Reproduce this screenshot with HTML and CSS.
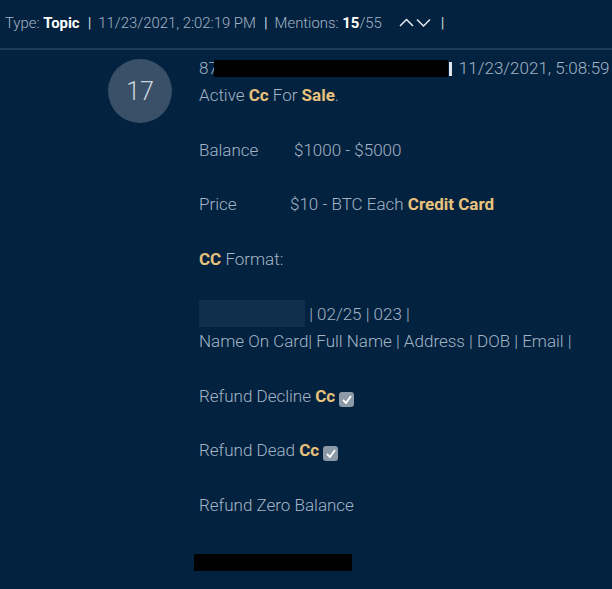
FILE: index.html
```html
<!DOCTYPE html>
<html>
<head>
<meta charset="utf-8">
<link rel="stylesheet" href="styles.css">
</head>
<body>
<div class="page">
  <header class="topbar">
    <span>Type: <b class="w">Topic</b></span>
    <span class="sep">|</span>
    <span>11/23/2021, 2:02:19 PM</span>
    <span class="sep">|</span>
    <span>Mentions: <b class="w">15</b>/55</span>
    <span class="chev">
      <svg width="34" height="12" viewBox="0 0 34 12"><path d="M1 9 L7.5 2.5 L14 9" fill="none" stroke="#e6edf4" stroke-width="1.5"/><path d="M18 2.5 L24.5 9 L31 2.5" fill="none" stroke="#e6edf4" stroke-width="1.5"/></svg>
    </span>
    <span class="sep last">|</span>
  </header>
  <main class="post">
    <div class="avatar">17</div>
    <div class="body">
      <div class="line meta"><span>87</span><span class="redact top"></span><span class="bar"></span><span>11/23/2021, 5:08:59</span></div>
      <div class="line">Active <b class="g">Cc</b> For <b class="g">Sale</b>.</div>
      <div class="line"></div>
      <div class="line"><span class="lbl lb1">Balance</span>$1000 - $5000</div>
      <div class="line"></div>
      <div class="line"><span class="lbl lb2">Price</span>$10 - BTC Each <b class="g">Credit Card</b></div>
      <div class="line"></div>
      <div class="line"><b class="g">CC</b> Format:</div>
      <div class="line"></div>
      <div class="line"><span class="blur"></span> | 02/25 | 023 |</div>
      <div class="line">Name On Card| Full Name | Address | DOB | Email |</div>
      <div class="line"></div>
      <div class="line">Refund Decline <b class="g">Cc</b> <span class="check"><svg width="10" height="9" viewBox="0 0 10 9"><path d="M1 5 L4 8 L9 1" fill="none" stroke="#fff" stroke-width="1.8"/></svg></span></div>
      <div class="line"></div>
      <div class="line">Refund Dead <b class="g">Cc</b> <span class="check"><svg width="10" height="9" viewBox="0 0 10 9"><path d="M1 5 L4 8 L9 1" fill="none" stroke="#fff" stroke-width="1.8"/></svg></span></div>
      <div class="line"></div>
      <div class="line">Refund Zero Balance</div>
      <div class="line"></div>
      <div class="line"><span class="redact bottom"></span></div>
    </div>
  </main>
</div>
</body>
</html>
```
FILE: styles.css
```css
html, body {
  margin: 0;
  padding: 0;
  background: #03223f;
  overflow: hidden;
}
.page {
  width: 612px;
  height: 589px;
  font-family: Roboto, "Liberation Sans", sans-serif;
  font-weight: 300;
  font-size: 17px;
  color: #a3b4c6;
}
.topbar {
  display: flex;
  align-items: center;
  height: 46px;
  padding-left: 5px;
  padding-bottom: 2px;
  border-bottom: 2px solid #1b3b5a;
  white-space: pre;
  font-size: 14.9px;
}
.topbar .sep {
  color: #c5d1dc;
  font-weight: 400;
  margin: 0 7px 0 8px;
}
.topbar .sep.last {
  margin-left: 8px;
}
.w {
  color: #ffffff;
  font-weight: 700;
}
.chev {
  display: flex;
  margin-left: 17px;
}
.post {
  display: flex;
  padding-top: 5px;
}
.avatar {
  width: 64px;
  height: 64px;
  border-radius: 50%;
  background: #3a5068;
  color: #cbd5df;
  font-size: 25px;
  font-weight: 300;
  display: flex;
  align-items: center;
  justify-content: center;
  margin: 4px 0 0 108px;
  flex: none;
}
.body {
  margin-left: 27px;
  flex: 1;
  min-width: 0;
}
.line {
  height: 27.3px;
  line-height: 27.3px;
  white-space: nowrap;
}
.meta {
  display: flex;
  align-items: center;
}
.redact {
  display: inline-block;
  background: #000;
}
.redact.top {
  width: 234px;
  height: 17px;
  margin-left: -4px;
  flex: none;
}
.bar {
  width: 3px;
  height: 14px;
  background: #e0e6ec;
  margin: 0 7px 0 1px;
  flex: none;
}
.meta span {
  flex: none;
}
.redact.bottom {
  width: 158px;
  height: 17px;
  margin-left: -5px;
  vertical-align: middle;
  margin-top: 3px;
}
.g {
  color: #e8c27c;
  font-weight: 700;
}
.lbl {
  display: inline-block;
}
.lb1 { width: 95px; }
.lb2 { width: 91px; }
.blur {
  display: inline-block;
  width: 106px;
  height: 27px;
  background: #102f4c;
  vertical-align: middle;
  margin-top: -3px;
}
.check {
  display: inline-flex;
  align-items: center;
  justify-content: center;
  width: 15px;
  height: 15px;
  border-radius: 3px;
  background: #8c99a6;
  vertical-align: -2px;
}
```
